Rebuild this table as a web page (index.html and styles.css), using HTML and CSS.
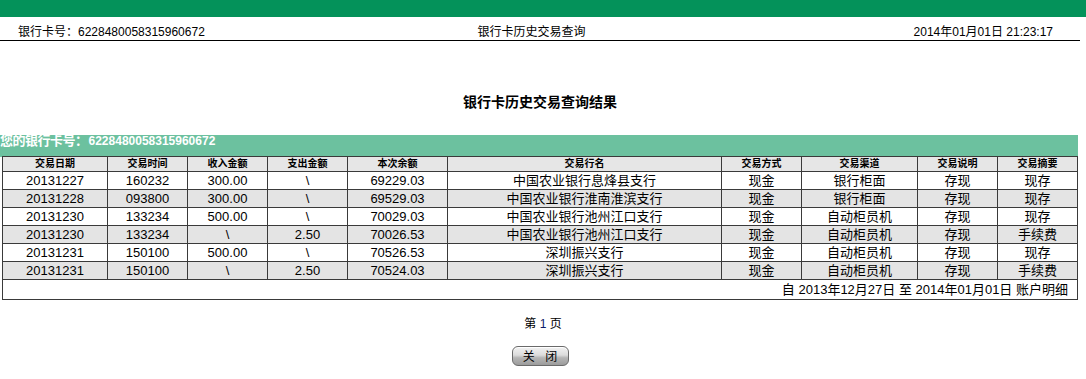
FILE: index.html
```html
<!DOCTYPE html>
<html lang="zh-CN">
<head>
<meta charset="utf-8">
<title>银行卡历史交易查询</title>
<link rel="stylesheet" href="styles.css">
</head>
<body>
<div class="topbar"></div>
<div class="page">
  <div class="infobar">
    <span class="info-left">银行卡号：6228480058315960672</span>
    <span class="info-center">银行卡历史交易查询</span>
    <span class="info-right">2014年01月01日 21:23:17</span>
  </div>
  <h1 class="title">银行卡历史交易查询结果</h1>
  <div class="cardband"><span class="band-label">您的银行卡号：</span>6228480058315960672</div>
  <table class="grid">
    <colgroup>
      <col class="c105"><col class="c80"><col class="c80"><col class="c80"><col class="c100"><col class="c274"><col class="c80"><col class="c116"><col class="c80"><col class="c80">
    </colgroup>
    <thead>
      <tr><th>交易日期</th><th>交易时间</th><th>收入金额</th><th>支出金额</th><th>本次余额</th><th>交易行名</th><th>交易方式</th><th>交易渠道</th><th>交易说明</th><th>交易摘要</th></tr>
    </thead>
    <tbody>
      <tr><td>20131227</td><td>160232</td><td>300.00</td><td>\</td><td>69229.03</td><td>中国农业银行息烽县支行</td><td>现金</td><td>银行柜面</td><td>存现</td><td>现存</td></tr>
      <tr class="alt"><td>20131228</td><td>093800</td><td>300.00</td><td>\</td><td>69529.03</td><td>中国农业银行淮南淮滨支行</td><td>现金</td><td>银行柜面</td><td>存现</td><td>现存</td></tr>
      <tr><td>20131230</td><td>133234</td><td>500.00</td><td>\</td><td>70029.03</td><td>中国农业银行池州江口支行</td><td>现金</td><td>自动柜员机</td><td>存现</td><td>现存</td></tr>
      <tr class="alt"><td>20131230</td><td>133234</td><td>\</td><td>2.50</td><td>70026.53</td><td>中国农业银行池州江口支行</td><td>现金</td><td>自动柜员机</td><td>存现</td><td>手续费</td></tr>
      <tr><td>20131231</td><td>150100</td><td>500.00</td><td>\</td><td>70526.53</td><td>深圳振兴支行</td><td>现金</td><td>自动柜员机</td><td>存现</td><td>现存</td></tr>
      <tr class="alt"><td>20131231</td><td>150100</td><td>\</td><td>2.50</td><td>70524.03</td><td>深圳振兴支行</td><td>现金</td><td>自动柜员机</td><td>存现</td><td>手续费</td></tr>
      <tr class="foot"><td colspan="10">自 2013年12月27日 至 2014年01月01日 账户明细</td></tr>
    </tbody>
  </table>
  <div class="pager">第 <span class="pnum">1</span> 页</div>
  <div class="actions"><button class="btn" type="button">关 闭</button></div>
</div>
</body>
</html>
```
FILE: styles.css
```css
html, body {
  margin: 0;
  padding: 0;
  background: #ffffff;
}
body {
  font-family: "Liberation Sans", Arial, "Noto Sans CJK SC", sans-serif;
  color: #000;
  font-size: 12px;
}
.topbar {
  height: 17px;
  background: #04925a;
}
.page {
  width: 1080px;
}
.infobar {
  display: flex;
  align-items: flex-end;
  justify-content: space-between;
  height: 24px;
  box-sizing: border-box;
  padding: 0 27px 1px 18px;
  border-bottom: 1px solid #000;
  font-size: 12px;
  line-height: 14px;
}
.info-left, .info-right {
  width: 200px;
}
.info-right {
  text-align: right;
}
.info-center {
  flex: 1;
  text-align: center;
  padding-right: 8px;
}
.title {
  margin: 53px 0 0 0;
  height: 22px;
  font-size: 14px;
  line-height: 16px;
  font-weight: bold;
  text-align: center;
}
.cardband {
  margin-top: 19px;
  width: 1078px;
  height: 22px;
  background: #6cc19f;
  color: #fff;
  font-weight: bold;
  font-size: 12px;
  line-height: 12px;
  box-sizing: border-box;
  padding-left: 0;
  margin-bottom: -1px;
}
.band-label {
  font-size: 13px;
  letter-spacing: -0.5px;
  margin-right: 1px;
}
.grid {
  margin-left: 2px;
  border-collapse: collapse;
  table-layout: fixed;
  width: 1076px;
  font-size: 13px;
}
.c105 { width: 105px; }
.c80 { width: 80px; }
.c100 { width: 100px; }
.c116 { width: 116px; }
.c274 { width: 274px; }
.grid th, .grid td {
  border: 1px solid #3a3a3a;
  text-align: center;
  padding: 0;
  white-space: nowrap;
}
.grid th {
  background: #e6e6e6;
  font-size: 10px;
  font-weight: bold;
  height: 14px;
  line-height: 12px;
}
.grid td {
  height: 17px;
  line-height: 15px;
}
.grid tr.alt td {
  background: #e4e4e4;
}
.grid tr.foot td {
  text-align: right;
  padding-right: 9px;
  height: 19px;
}
.pager {
  margin-top: 17px;
  text-align: center;
  font-size: 12px;
  line-height: 14px;
  padding-left: 6px;
}
.pnum {
  color: #0d1b6a;
}
.actions {
  margin-top: 15px;
  text-align: center;
  padding-left: 0;
}
.btn {
  width: 57px;
  height: 20px;
  padding: 0;
  border: 1px solid #6a6a6a;
  border-radius: 6px;
  background: linear-gradient(#f2f2f2 0%, #dcdcdc 45%, #b5b5b5 60%, #9c9c9c 100%);
  font-family: "Noto Sans CJK SC", sans-serif;
  font-size: 12px;
  line-height: 16px;
  letter-spacing: 4px;
  color: #000;
  text-indent: 4px;
  box-shadow: inset 0 1px 0 #fff;
}
```
